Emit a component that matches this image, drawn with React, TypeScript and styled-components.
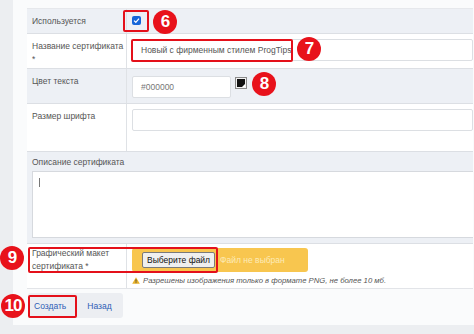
import React from 'react';
import styled, {createGlobalStyle} from 'styled-components';

const GlobalStyle = createGlobalStyle`
  body {
    margin: 0;
    background: #eceef1;
    font-family: 'Liberation Sans', Arial, sans-serif;
  }
`;

interface BadgeProps {
  $x: number;
  $y: number;
}

interface BoxProps {
  $x: number;
  $y: number;
  $w: number;
  $h: number;
}

const badges = [
  {n: '6', x: 153, y: 10},
  {n: '7', x: 297, y: 37},
  {n: '8', x: 252, y: 72},
  {n: '9', x: 0, y: 246},
  {n: '10', x: 1, y: 294},
];

const boxes = [
  {x: 123, y: 10, w: 26, h: 22},
  {x: 131, y: 39, w: 162, h: 23},
  {x: 28, y: 247, w: 190, h: 26},
  {x: 28, y: 295, w: 49, h: 23},
];

export default function App() {
  return (
    <>
      <GlobalStyle />
      <Page>
        <Card>
          <Table>
            <Row $gray $h={25}>
              <Label>Используется</Label>
              <Value $pt={7}>
                <CheckBox>
                  <svg width="7" height="7" viewBox="0 0 10 10">
                    <path d="M1.5 5.2 L4 7.6 L8.6 2.4" stroke="#fff" strokeWidth="1.8" fill="none" />
                  </svg>
                </CheckBox>
              </Value>
            </Row>
            <Row $h={35}>
              <Label>
                Название сертификата
                <br />*
              </Label>
              <Value $pt={5}>
                <TextInput $w="100%">Новый с фирменным стилем ProgTips</TextInput>
              </Value>
            </Row>
            <Row $gray $h={35}>
              <Label>Цвет текста</Label>
              <Value $pt={7}>
                <ColorLine>
                  <TextInput $w="99px" $muted>#000000</TextInput>
                  <Swatch>
                    <svg width="12" height="12" viewBox="0 0 12 12">
                      <rect x="0.5" y="0.5" width="11" height="11" fill="#f2f2f2" stroke="#8a8a8a" />
                      <rect x="2" y="2" width="8" height="8" fill="#111" />
                      <path d="M10 7 L10 10 L7 10 Z" fill="#fff" />
                    </svg>
                  </Swatch>
                </ColorLine>
              </Value>
            </Row>
            <Row $h={48}>
              <Label>Размер шрифта</Label>
              <Value $pt={5}>
                <TextInput $w="100%" />
              </Value>
            </Row>
            <Wide>
              <WideLabel>Описание сертификата</WideLabel>
              <TextArea>
                <Caret />
              </TextArea>
            </Wide>
            <Row $h={45} $last>
              <Label $pt={3}>
                Графический макет
                <br />
                сертификата *
              </Label>
              <Value $pt={4}>
                <FileBox>
                  <FileButton>Выберите файл</FileButton>
                  <FileName>Файл не выбран</FileName>
                </FileBox>
                <Hint>
                  <svg width="8" height="7" viewBox="0 0 8 7">
                    <path d="M4 0.3 L7.8 6.8 L0.2 6.8 Z" fill="#e8b22a" />
                    <rect x="3.6" y="2.3" width="0.8" height="2.4" fill="#333" />
                    <rect x="3.6" y="5.3" width="0.8" height="0.8" fill="#333" />
                  </svg>
                  <span>Разрешены изображения только в формате PNG, не более 10 мб.</span>
                </Hint>
              </Value>
            </Row>
          </Table>
          <Actions>
            <ButtonGroup>
              <LinkButton>Создать</LinkButton>
              <LinkButton>Назад</LinkButton>
            </ButtonGroup>
          </Actions>
        </Card>
        {boxes.map((b, i) => (
          <Highlight key={i} $x={b.x} $y={b.y} $w={b.w} $h={b.h} />
        ))}
        {badges.map((b) => (
          <Badge key={b.n} $x={b.x} $y={b.y}>
            {b.n}
          </Badge>
        ))}
      </Page>
    </>
  );
}

const Page = styled.div`
  position: relative;
  width: 474px;
  height: 334px;
  padding-left: 13px;
  box-sizing: border-box;
  overflow: hidden;
  display: flex;
  align-items: flex-start;
`;

const Card = styled.div`
  flex: 1;
  height: 325px;
  background: #fafbfc;
  padding: 9px 1px 0 14px;
  box-sizing: border-box;
  display: flex;
  flex-direction: column;
`;

const Table = styled.div`
  display: flex;
  flex-direction: column;
  border-top: 1px solid #e6e8ec;
  margin-top: -1px;
`;

const Row = styled.div<{$gray?: boolean; $h: number; $last?: boolean}>`
  display: grid;
  grid-template-columns: 100px 1fr;
  height: ${(p) => p.$h}px;
  box-sizing: border-box;
  background: ${(p) => (p.$gray ? '#edf0f5' : '#ffffff')};
  border-bottom: 1px solid ${(p) => (p.$last ? '#e2e4e8' : '#dcdfe4')};
`;

const Label = styled.div<{$pt?: number}>`
  padding: ${(p) => p.$pt ?? 6}px 0 0 5px;
  font-size: 8.5px;
  line-height: 13px;
  color: #555;
  white-space: nowrap;
  border-right: 1px solid #dfe2e6;
`;

const Value = styled.div<{$pt: number}>`
  padding: ${(p) => p.$pt}px 0 0 5px;
  display: flex;
  flex-direction: column;
  align-items: flex-start;
`;

const CheckBox = styled.span`
  width: 9px;
  height: 9px;
  border-radius: 2px;
  background: #1565d8;
  display: flex;
  align-items: center;
  justify-content: center;
`;

const TextInput = styled.div<{$w: string; $muted?: boolean}>`
  width: ${(p) => p.$w};
  height: 22px;
  box-sizing: border-box;
  background: #fff;
  border: 1px solid #dcdfe3;
  border-radius: 2px;
  padding-left: 8px;
  font-size: 8.5px;
  line-height: 20px;
  color: ${(p) => (p.$muted ? '#777' : '#555')};
  white-space: nowrap;
`;

const ColorLine = styled.div`
  display: flex;
  align-items: flex-start;
  gap: 4px;
`;

const Swatch = styled.span`
  display: flex;
  margin-top: 1px;
`;

const Wide = styled.div`
  background: #edf0f5;
  padding: 0 0 5px 5px;
  border-bottom: 1px solid #dcdfe4;
`;

const WideLabel = styled.div`
  height: 19px;
  font-size: 8.5px;
  line-height: 20px;
  color: #555;
`;

const TextArea = styled.div`
  height: 67px;
  box-sizing: border-box;
  background: #fff;
  border: 1px solid #d6d9de;
  border-right: none;
  padding: 6px 0 0 6px;
`;

const Caret = styled.div`
  width: 1px;
  height: 9px;
  background: #777;
`;

const FileBox = styled.div`
  width: 176px;
  height: 24px;
  box-sizing: border-box;
  background: #f8c64f;
  border-radius: 3px;
  display: flex;
  align-items: center;
  padding-left: 10px;
  gap: 5px;
`;

const FileButton = styled.div`
  height: 14px;
  padding: 0 4px;
  background: #efefef;
  border: 1px solid #7a7a7a;
  border-radius: 2px;
  font-size: 8.5px;
  line-height: 14px;
  color: #111;
  white-space: nowrap;
`;

const FileName = styled.span`
  font-size: 8.5px;
  color: #fdebb8;
  white-space: nowrap;
`;

const Hint = styled.div`
  margin-top: 4px;
  display: flex;
  align-items: center;
  gap: 3px;
  font-size: 7.7px;
  font-style: italic;
  color: #555;
  white-space: nowrap;
`;

const Actions = styled.div`
  padding: 4px 0 0 1px;
`;

const ButtonGroup = styled.div`
  display: inline-flex;
  align-items: center;
  height: 25px;
  width: 95px;
  background: #eceef2;
  border-radius: 3px;
  padding-left: 6px;
  gap: 21px;
  box-sizing: border-box;
`;

const LinkButton = styled.span`
  font-size: 8.5px;
  color: #2c5db5;
`;

const Highlight = styled.div<BoxProps>`
  position: absolute;
  left: ${(p) => p.$x}px;
  top: ${(p) => p.$y}px;
  width: ${(p) => p.$w}px;
  height: ${(p) => p.$h}px;
  box-sizing: border-box;
  border: 2.5px solid #e4101a;
  border-radius: 2px;
  pointer-events: none;
`;

const Badge = styled.div<BadgeProps>`
  position: absolute;
  left: ${(p) => p.$x}px;
  top: ${(p) => p.$y}px;
  width: 24px;
  height: 24px;
  border-radius: 50%;
  background: #e8121b;
  color: #fff;
  font-size: 17px;
  font-weight: bold;
  display: flex;
  align-items: center;
  justify-content: center;
  letter-spacing: -1px;
`;
